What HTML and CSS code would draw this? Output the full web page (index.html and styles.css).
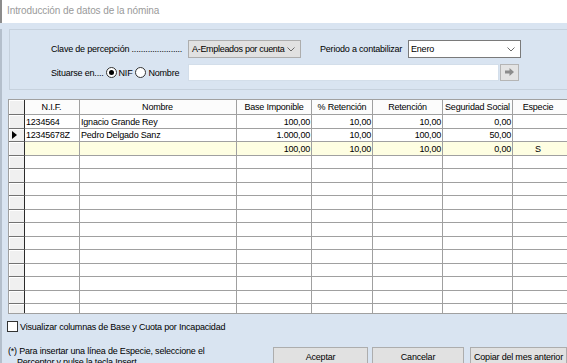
FILE: index.html
```html
<!DOCTYPE html>
<html lang="es">
<head>
    <meta charset="UTF-8">
    <title>Introducción de datos de la nómina</title>
    <link rel="stylesheet" href="styles.css">
</head>
<body>
    <div class="titlebar">Introducción de datos de la nómina</div>
    <div class="client">
        <div class="panel">
            <div class="panel-row">
                <span class="label label-clave">Clave de percepción ......................</span>
                <div class="combo combo-gray">
                    <span>A-Empleados por cuenta</span>
                    <svg width="8" height="5" viewBox="0 0 8 5"><polyline points="0.5,0.5 4,4 7.5,0.5" fill="none" stroke="#6a6a6a"/></svg>
                </div>
                <span class="label label-periodo">Periodo a contabilizar</span>
                <div class="combo combo-white">
                    <span>Enero</span>
                    <svg width="8" height="5" viewBox="0 0 8 5"><polyline points="0.5,0.5 4,4 7.5,0.5" fill="none" stroke="#6a6a6a"/></svg>
                </div>
            </div>
            <div class="panel-row">
                <div class="label-clave situar">
                    <span>Situarse en....</span>
                    <span class="radio checked"></span><span>NIF</span>
                    <span class="radio"></span><span>Nombre</span>
                </div>
                <div class="search"></div>
                <button class="go">
                    <svg width="9" height="8" viewBox="0 0 9 8"><path d="M0 2.5h4.5V0L9 4 4.5 8V5.5H0z" fill="#8c8c8c"/></svg>
                </button>
            </div>
        </div>

        <div class="grid">
            <div class="row head">
                <div class="cell ind"></div>
                <div class="cell c-nif">N.I.F.</div>
                <div class="cell c-nom">Nombre</div>
                <div class="cell c-base">Base Imponible</div>
                <div class="cell c-pret">% Retención</div>
                <div class="cell c-ret">Retención</div>
                <div class="cell c-ss">Seguridad Social</div>
                <div class="cell c-esp">Especie</div>
                <div class="cell fill"></div>
            </div>
            <div class="row">
                <div class="cell ind"></div>
                <div class="cell c-nif">1234564</div>
                <div class="cell c-nom">Ignacio Grande Rey</div>
                <div class="cell c-base num">100,00</div>
                <div class="cell c-pret num">10,00</div>
                <div class="cell c-ret num">10,00</div>
                <div class="cell c-ss num">0,00</div>
                <div class="cell c-esp"></div>
                <div class="cell fill"></div>
            </div>
            <div class="row">
                <div class="cell ind"><span class="marker"></span></div>
                <div class="cell c-nif">12345678Z</div>
                <div class="cell c-nom">Pedro Delgado Sanz</div>
                <div class="cell c-base num">1.000,00</div>
                <div class="cell c-pret num">10,00</div>
                <div class="cell c-ret num">100,00</div>
                <div class="cell c-ss num">50,00</div>
                <div class="cell c-esp"></div>
                <div class="cell fill"></div>
            </div>
            <div class="row new">
                <div class="cell ind"></div>
                <div class="cell c-nif"></div>
                <div class="cell c-nom"></div>
                <div class="cell c-base num">100,00</div>
                <div class="cell c-pret num">10,00</div>
                <div class="cell c-ret num">10,00</div>
                <div class="cell c-ss num">0,00</div>
                <div class="cell c-esp">S</div>
                <div class="cell fill"></div>
            </div>
            <div class="row"><div class="cell ind"></div><div class="cell c-nif"></div><div class="cell c-nom"></div><div class="cell c-base"></div><div class="cell c-pret"></div><div class="cell c-ret"></div><div class="cell c-ss"></div><div class="cell c-esp"></div><div class="cell fill"></div></div>
            <div class="row"><div class="cell ind"></div><div class="cell c-nif"></div><div class="cell c-nom"></div><div class="cell c-base"></div><div class="cell c-pret"></div><div class="cell c-ret"></div><div class="cell c-ss"></div><div class="cell c-esp"></div><div class="cell fill"></div></div>
            <div class="row"><div class="cell ind"></div><div class="cell c-nif"></div><div class="cell c-nom"></div><div class="cell c-base"></div><div class="cell c-pret"></div><div class="cell c-ret"></div><div class="cell c-ss"></div><div class="cell c-esp"></div><div class="cell fill"></div></div>
            <div class="row"><div class="cell ind"></div><div class="cell c-nif"></div><div class="cell c-nom"></div><div class="cell c-base"></div><div class="cell c-pret"></div><div class="cell c-ret"></div><div class="cell c-ss"></div><div class="cell c-esp"></div><div class="cell fill"></div></div>
            <div class="row"><div class="cell ind"></div><div class="cell c-nif"></div><div class="cell c-nom"></div><div class="cell c-base"></div><div class="cell c-pret"></div><div class="cell c-ret"></div><div class="cell c-ss"></div><div class="cell c-esp"></div><div class="cell fill"></div></div>
            <div class="row"><div class="cell ind"></div><div class="cell c-nif"></div><div class="cell c-nom"></div><div class="cell c-base"></div><div class="cell c-pret"></div><div class="cell c-ret"></div><div class="cell c-ss"></div><div class="cell c-esp"></div><div class="cell fill"></div></div>
            <div class="row"><div class="cell ind"></div><div class="cell c-nif"></div><div class="cell c-nom"></div><div class="cell c-base"></div><div class="cell c-pret"></div><div class="cell c-ret"></div><div class="cell c-ss"></div><div class="cell c-esp"></div><div class="cell fill"></div></div>
            <div class="row"><div class="cell ind"></div><div class="cell c-nif"></div><div class="cell c-nom"></div><div class="cell c-base"></div><div class="cell c-pret"></div><div class="cell c-ret"></div><div class="cell c-ss"></div><div class="cell c-esp"></div><div class="cell fill"></div></div>
            <div class="row"><div class="cell ind"></div><div class="cell c-nif"></div><div class="cell c-nom"></div><div class="cell c-base"></div><div class="cell c-pret"></div><div class="cell c-ret"></div><div class="cell c-ss"></div><div class="cell c-esp"></div><div class="cell fill"></div></div>
            <div class="row"><div class="cell ind"></div><div class="cell c-nif"></div><div class="cell c-nom"></div><div class="cell c-base"></div><div class="cell c-pret"></div><div class="cell c-ret"></div><div class="cell c-ss"></div><div class="cell c-esp"></div><div class="cell fill"></div></div>
            <div class="row"><div class="cell ind"></div><div class="cell c-nif"></div><div class="cell c-nom"></div><div class="cell c-base"></div><div class="cell c-pret"></div><div class="cell c-ret"></div><div class="cell c-ss"></div><div class="cell c-esp"></div><div class="cell fill"></div></div>
            <div class="row"><div class="cell ind"></div><div class="cell c-nif"></div><div class="cell c-nom"></div><div class="cell c-base"></div><div class="cell c-pret"></div><div class="cell c-ret"></div><div class="cell c-ss"></div><div class="cell c-esp"></div><div class="cell fill"></div></div>
        </div>

        <label class="check">
            <span class="box"></span>
            <span>Visualizar columnas de Base y Cuota por Incapacidad</span>
        </label>

        <div class="footer">
            <p class="note">(*) Para insertar una línea de Especie, seleccione el Perceptor y pulse la tecla Insert</p>
            <div class="buttons">
                <button class="btn btn-ok">Aceptar</button>
                <button class="btn btn-cancel">Cancelar</button>
                <button class="btn btn-copy">Copiar del mes anterior</button>
            </div>
        </div>
    </div>
</body>
</html>
```

FILE: styles.css
```css
*{
    margin: 0px;
    padding: 0px;
    box-sizing: border-box;
}
body{
    width: 567px;
    height: 363px;
    overflow: hidden;
    font-family: "Liberation Sans", Arial, sans-serif;
    font-size: 9px;
    letter-spacing: -0.2px;
    color: black;
    background-color: #d9e4f1;
}
button{
    font-family: inherit;
    font-size: 9px;
    letter-spacing: -0.2px;
    color: black;
}
.titlebar{
    height: 23px;
    background-color: white;
    border-left: 2px solid #8c8c8c;
    padding: 5px 0px 0px 5px;
    font-size: 10px;
    line-height: 12px;
    letter-spacing: -0.1px;
    color: #9a9a9a;
}
.client{
    height: 340px;
    border-left: 2px solid #b4bfcc;
}

/* Filtros */
.panel{
    display: flex;
    flex-direction: column;
    gap: 6px;
    margin: 6px -40px 0px 7px;
    padding: 10px 0px 8px 41px;
    border: 1px solid #c6d1dd;
}
.panel-row{
    display: flex;
    align-items: center;
}
.panel-row:first-child{
    height: 18px;
}
.panel-row:last-child{
    height: 17px;
}
.label-clave{
    width: 137px;
    white-space: nowrap;
}
.label-periodo{
    width: 88px;
    margin-left: 19px;
}
.combo{
    width: 113px;
    height: 18px;
    display: flex;
    align-items: center;
    justify-content: space-between;
    padding: 0px 5px 0px 3px;
}
.combo-gray{
    background-color: #e1e1e1;
    border: 1px solid #adadad;
    letter-spacing: -0.3px;
}
.combo-white{
    background-color: white;
    border: 1px solid #7a7a7a;
    padding-left: 2px;
}
.situar{
    display: flex;
    align-items: center;
}
.radio{
    width: 11px;
    height: 11px;
    border: 1px solid #333;
    border-radius: 50%;
    background-color: white;
    margin: 0px 2px 0px 2px;
    display: flex;
    align-items: center;
    justify-content: center;
}
.radio.checked::after{
    content: "";
    width: 5px;
    height: 5px;
    border-radius: 50%;
    background-color: black;
}
.situar span:nth-child(4){
    margin-left: 3px;
}
.search{
    width: 311px;
    height: 17px;
    background-color: white;
    border: 1px solid #d3deea;
}
.go{
    width: 19px;
    height: 17px;
    margin-left: 1px;
    background-color: #e4e4e4;
    border: 1px solid #b5b5b5;
    display: flex;
    align-items: center;
    justify-content: center;
    padding-bottom: 2px;
}

/* Rejilla */
.grid{
    width: 620px;
    height: 215px;
    margin: 9px 0px 0px 6px;
    border-top: 1px solid #a0a0a0;
    border-left: 1px solid #a0a0a0;
    border-bottom: 1px solid #a0a0a0;
    background-color: white;
    overflow: hidden;
}
.row{
    display: flex;
    height: 14px;
}
.row:nth-child(odd){
    height: 13px;
}
.row.head{
    height: 15px;
}
.cell{
    flex: none;
    display: flex;
    align-items: center;
    padding: 0px 2px;
    border-right: 1px solid #a0a0a0;
    border-bottom: 1px solid #a0a0a0;
    white-space: nowrap;
    overflow: hidden;
}
.head .cell{
    justify-content: center;
    background-color: #fcfcfc;
}
.ind, .head .ind{
    width: 16px;
    background-color: #f0f0f0;
    border-right: 1px solid #2b2b2b;
    border-bottom-color: #727272;
    box-shadow: inset 1px 1px 0px white;
    padding: 0px 0px 0px 3px;
}
.c-nif{ width: 55px; padding-left: 1px; }
.c-nom{ width: 157px; padding-left: 1px; }
.c-base{ width: 75px; }
.c-pret{ width: 61px; }
.c-ret{ width: 70px; }
.c-ss{ width: 70px; }
.c-esp{ width: 50px; justify-content: center; border-right: none; }
.fill{ flex: 1; border-right: none; }
.num{
    justify-content: flex-end;
    padding-right: 1px;
}
.new .cell{
    background-color: #fefee2;
}
.new .ind{
    background-color: #f0f0f0;
}
.marker{
    width: 0px;
    height: 0px;
    border-left: 5px solid black;
    border-top: 4px solid transparent;
    border-bottom: 4px solid transparent;
}

/* Pie */
.check{
    display: flex;
    align-items: center;
    gap: 2px;
    height: 11px;
    margin: 7px 0px 0px 5px;
}
.box{
    width: 11px;
    height: 11px;
    border: 1px solid #333;
    background-color: white;
}
.footer{
    display: flex;
    margin-top: 14px;
}
.note{
    flex: none;
    width: 207px;
    margin-left: 6px;
    padding-left: 9px;
    text-indent: -9px;
    line-height: 11px;
}
.buttons{
    display: flex;
    margin: 1px 0px 0px 58px;
}
.btn{
    height: 19px;
    background-color: #e1e1e1;
    border: 1px solid #adadad;
}
.btn-ok{ width: 95px; }
.btn-cancel{ width: 92px; margin-left: 4px; }
.btn-copy{ width: 97px; margin-left: 6px; }
```
